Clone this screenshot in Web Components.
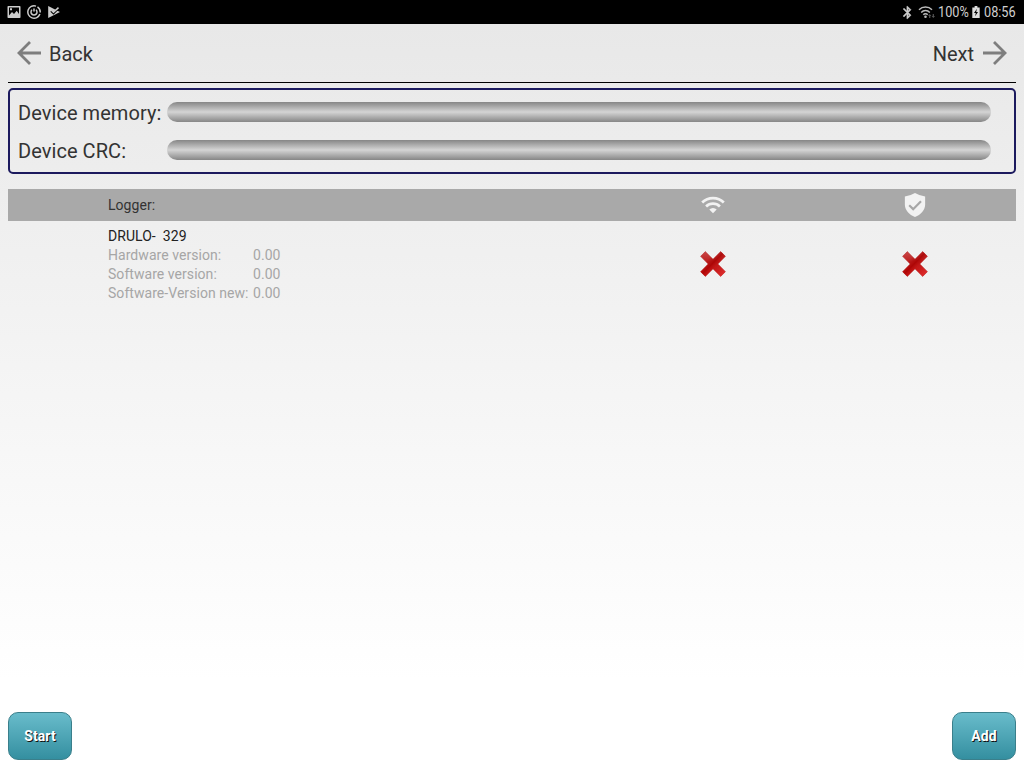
<!DOCTYPE html>
<html lang="en">
<head>
<meta charset="utf-8">
<title>Logger update</title>
<style>
    html, body {
        margin: 0;
        height: 100%;
        overflow: hidden;
    }

    body {
        font-family: Roboto, "Liberation Sans", sans-serif;
        color: #333;
    }
</style>
</head>
<body>
<logger-app></logger-app>

<script>
// Icon shapes, each with its own viewBox
const ICONS = {
    image: ['0 0 14 14', '<path fill="#ccc" fill-rule="evenodd" d="M1.3 1h11.4q.8 0 .8.8v10.4q0 .8-.8.8H1.3q-.8 0-.8-.8V1.8q0-.8.8-.8zM2 2.5v8L5 7l2 2 2.7-3.2L12 9V2.500z"/><path fill="#ccc" d="M3 3.300h2v2H3z"/>'],
    sync: ['0 0 14 14', '<g fill="none" stroke="#ccc" stroke-width="1.500"><path d="M9 1.100A6.200 6.200 0 1 0 12.900 9"/><path d="M10.500 1.900A6.200 6.200 0 0 1 13.200 7.500"/><path d="M5 4.800a3 3 0 1 0 4 0"/><path d="M7 3.600v3"/></g>'],
    play: ['0 0 14 14', '<path fill="#ccc" d="M1.200 1L13 7 1.200 13z"/><path fill="none" stroke="#000" stroke-width="1.300" d="M3.800 6.200l2.700 2.600L12.200 3"/><path fill="none" stroke="#ccc" stroke-width="1.500" d="M4.500 5.200l2 2L11.500 2.600"/>'],
    bluetooth: ['0 0 24 24', '<path fill="#ccc" stroke="#ccc" stroke-width=".8" d="M17.710 7.710L12 2h-1v7.590L6.410 5 5 6.410 10.590 12 5 17.590 6.410 19 11 14.410V22h1l5.710-5.710-4.300-4.290 4.300-4.290zM13 5.830l1.880 1.880L13 9.590V5.830zm1.880 10.460L13 18.170v-3.760l1.880 1.880z"/>'],
    signal: ['0 0 18 16', '<g fill="none" stroke="#bbb" stroke-width="1.500"><path d="M1 5.800a9.200 9.200 0 0 1 13 0"/><path d="M3.200 8.400a6 6 0 0 1 8.600 0"/><path d="M5.300 10.800a3 3 0 0 1 4.400 0"/></g><circle cx="7.500" cy="12.800" r="1.300" fill="#bbb"/><path fill="#555" d="M10 12l1.700-2 1.700 2h-1.100v2h-1.200v-2zM13.600 12h1.100v-2h1.200v2H17l-1.700 2z"/>'],
    battery: ['0 0 8 13', '<path fill="#ddd" fill-rule="evenodd" d="M2.500 0h3v1.500H8V13H0V1.500h2.500zM5 3L1.800 7.600h2L3 11l3.200-4.500h-2z"/>'],
    back: ['0 0 26 26', '<path fill="none" stroke="#7e7e7e" stroke-width="2.800" d="M25 13H3M14 2L3 13l11 11"/>'],
    next: ['0 0 26 26', '<path fill="none" stroke="#7e7e7e" stroke-width="2.800" d="M1 13h22M12 2l11 11-11 11"/>'],
    wifi: ['0 0 24 18', '<g fill="none" stroke="#f2f2f2" stroke-width="2.700"><path d="M1.200 6.500a15.300 15.300 0 0 1 21.600 0"/><path d="M5.100 10.500a9.800 9.800 0 0 1 13.800 0"/></g><path fill="#f2f2f2" d="M8.300 13.400a5.300 5.300 0 0 1 7.400 0L12 17.300z"/>'],
    shield: ['2 1 20 22', '<path fill="#f2f2f2" d="M12 1Q17 3.800 21.300 4.300v7.200c0 5-4 9.500-9.300 11.500-5.300-2-9.300-6.500-9.300-11.500V4.300Q7 3.800 12 1z"/><path fill="none" stroke="#a7a7a7" stroke-width="2" d="M6.700 12.300l3.600 3.500 7.200-7.300"/>'],
    cross: ['0 0 26 26', '<defs><linearGradient id="arm" x1="0" y1="0" x2="0" y2="1"><stop offset="0" stop-color="#c84848"/><stop offset=".4" stop-color="#be2020"/><stop offset="1" stop-color="#d01818"/></linearGradient><linearGradient id="shade" x1="0" y1="0" x2="1" y2="1"><stop offset=".3" stop-color="#a80000" stop-opacity="0"/><stop offset=".48" stop-color="#a80000" stop-opacity=".8"/><stop offset=".6" stop-color="#c01010" stop-opacity=".5"/><stop offset="1" stop-color="#f04040" stop-opacity=".7"/></linearGradient></defs><g stroke-linejoin="round"><path id="x" fill="url(#arm)" stroke="#b83030" stroke-width=".6" d="M5.300.6L13 8.200 20.700.6 25.400 5.300 17.800 13l7.600 7.700-4.700 4.700L13 17.800 5.300 25.400.6 20.700 8.200 13 .6 5.300z"/><path fill="url(#shade)" d="M5.300.6L13 8.200 20.700.6 25.400 5.300 17.800 13l7.600 7.700-4.700 4.700L13 17.800 5.300 25.400.6 20.700 8.200 13 .6 5.300z"/></g>']
};

class AppIcon extends HTMLElement {
    connectedCallback() {
        const [box, shape] = ICONS[this.getAttribute('name')];
        this.attachShadow({ mode: 'open' }).innerHTML = `
            <style>
                :host { display: block; flex: none; }
                svg { display: block; width: 100%; height: 100%; }
            </style>
            <svg viewBox="${box}">${shape}</svg>
        `;
    }
}

class StatusBar extends HTMLElement {
    constructor() {
        super();
        this.attachShadow({ mode: 'open' }).innerHTML = `
            <style>
                :host {
                    display: flex;
                    justify-content: space-between;
                    box-sizing: border-box;
                    height: 24px;
                    padding: 0 8px 0 7px;
                    background: #000;
                    color: #d0d0d0;
                    font-size: 15.5px;
                    line-height: 25px;
                }

                .group { display: flex; align-items: center; }
                .left { gap: 6px; }
                .left app-icon { width: 14px; height: 14px; }
                .bt { width: 15px; height: 15px; margin-right: 3px; }
                .signal { width: 18px; height: 16px; margin-right: 2px; }
                .battery { width: 8px; height: 12px; margin: 0 4px; }

                /* condensed digits */
                .text {
                    white-space: nowrap;
                    transform: scaleX(.82);
                    transform-origin: left;
                }
                .level { width: 30px; }
                .time { width: 32px; }
            </style>
            <div class="group left">
                <app-icon name="image"></app-icon>
                <app-icon name="sync"></app-icon>
                <app-icon name="play"></app-icon>
            </div>
            <div class="group">
                <app-icon class="bt" name="bluetooth"></app-icon>
                <app-icon class="signal" name="signal"></app-icon>
                <span class="text level">100%</span>
                <app-icon class="battery" name="battery"></app-icon>
                <span class="text time">08:56</span>
            </div>
        `;
    }
}

class NavBar extends HTMLElement {
    constructor() {
        super();
        this.attachShadow({ mode: 'open' }).innerHTML = `
            <style>
                :host {
                    display: flex;
                    justify-content: space-between;
                    box-sizing: border-box;
                    height: 59px;
                    margin: 0 8px;
                    padding: 0 8px;
                    border-bottom: 1px solid #000;
                    font-size: 20px;
                }

                div { display: flex; align-items: center; gap: 7px; height: 60px; }
                div + div { gap: 8px; }
                app-icon { width: 26px; height: 26px; margin-top: -2px; }
            </style>
            <div><app-icon name="back"></app-icon><slot name="back"></slot></div>
            <div><slot name="next"></slot><app-icon name="next"></app-icon></div>
        `;
    }
}

class ProgressRow extends HTMLElement {
    constructor() {
        super();
        this.attachShadow({ mode: 'open' }).innerHTML = `
            <style>
                :host {
                    display: grid;
                    grid-template-columns: 149px 1fr;
                    align-items: center;
                    height: 38px;
                    font-size: 20px;
                    letter-spacing: .06px;
                    white-space: nowrap;
                }

                .bar {
                    height: 20px;
                    margin-top: -2px;
                    border-radius: 10px;
                    background: linear-gradient(#868686, #d4d4d4 50%, #868686);
                }
            </style>
            <slot></slot>
            <div class="bar"></div>
        `;
    }
}

class ProgressPanel extends HTMLElement {
    constructor() {
        super();
        this.attachShadow({ mode: 'open' }).innerHTML = `
            <style>
                :host {
                    display: block;
                    box-sizing: border-box;
                    height: 86px;
                    margin: 5px 8px 15px;
                    padding: 4px 23px 0 8px;
                    border: 2px solid #1c1a5e;
                    border-radius: 5px;
                }
            </style>
            <slot></slot>
        `;
    }
}

class LoggerTable extends HTMLElement {
    constructor() {
        super();
        this.attachShadow({ mode: 'open' }).innerHTML = `
            <style>
                :host {
                    display: block;
                    margin: 0 8px;
                    font-size: 14px;
                    letter-spacing: .05px;
                }

                .head {
                    display: grid;
                    grid-template-columns: 1fr 202px 202px;
                    align-items: center;
                    justify-items: center;
                    height: 32px;
                    background: #a9a9a9;
                }

                .title { justify-self: start; padding-left: 100px; }
                .wifi { width: 24px; height: 18px; }
                .shield { width: 22px; height: 24px; }
            </style>
            <div class="head">
                <span class="title">Logger:</span>
                <app-icon class="wifi" name="wifi"></app-icon>
                <app-icon class="shield" name="shield"></app-icon>
            </div>
            <slot></slot>
        `;
    }
}

class LoggerRow extends HTMLElement {
    connectedCallback() {
        this.attachShadow({ mode: 'open' }).innerHTML = `
            <style>
                :host {
                    display: grid;
                    grid-template-columns: 1fr 202px 202px;
                    align-items: center;
                    justify-items: center;
                    padding-top: 6px;
                    line-height: 19px;
                }

                .info { justify-self: start; padding-left: 100px; }
                .name { color: #222; white-space: pre; }

                .versions {
                    display: grid;
                    grid-template-columns: 145px auto;
                    color: #a6a6a6;
                    white-space: nowrap;
                }

                app-icon { width: 26px; height: 26px; margin-top: -3px; }
            </style>
            <div class="info">
                <div class="name"><slot></slot></div>
                <div class="versions">
                    <span>Hardware version:</span><span>${this.getAttribute('hardware')}</span>
                    <span>Software version:</span><span>${this.getAttribute('software')}</span>
                    <span>Software-Version new:</span><span>${this.getAttribute('latest')}</span>
                </div>
            </div>
            <app-icon name="cross"></app-icon>
            <app-icon name="cross"></app-icon>
        `;
    }
}

class ActionButton extends HTMLElement {
    constructor() {
        super();
        this.attachShadow({ mode: 'open' }).innerHTML = `
            <style>
                :host { display: block; }

                button {
                    display: block;
                    width: 64px;
                    height: 48px;
                    padding: 0;
                    border: 1px solid #3a7f8b;
                    border-radius: 10px;
                    background: linear-gradient(#69bccb, #348fa0);
                    color: #fff;
                    font: bold 14px Roboto, "Liberation Sans", sans-serif;
                    letter-spacing: .1px;
                    text-shadow: 1px 1px 0 #111;
                }
            </style>
            <button><slot></slot></button>
        `;
    }
}

class LoggerApp extends HTMLElement {
    constructor() {
        super();
        this.attachShadow({ mode: 'open' }).innerHTML = `
            <style>
                :host {
                    display: flex;
                    flex-direction: column;
                    height: 100vh;
                    background: linear-gradient(#e8e8e8 24px, #fff 680px);
                }

                .actions {
                    display: flex;
                    justify-content: space-between;
                    margin-top: auto;
                    padding: 8px;
                }
            </style>
            <status-bar></status-bar>
            <nav-bar>
                <span slot="back">Back</span>
                <span slot="next">Next</span>
            </nav-bar>
            <progress-panel>
                <progress-row>Device memory:</progress-row>
                <progress-row>Device CRC:</progress-row>
            </progress-panel>
            <logger-table>
                <logger-row hardware="0.00" software="0.00" latest="0.00">DRULO-  329</logger-row>
            </logger-table>
            <div class="actions">
                <action-button>Start</action-button>
                <action-button>Add</action-button>
            </div>
        `;
    }
}

// Register the custom elements
customElements.define('app-icon', AppIcon);
customElements.define('status-bar', StatusBar);
customElements.define('nav-bar', NavBar);
customElements.define('progress-row', ProgressRow);
customElements.define('progress-panel', ProgressPanel);
customElements.define('logger-table', LoggerTable);
customElements.define('logger-row', LoggerRow);
customElements.define('action-button', ActionButton);
customElements.define('logger-app', LoggerApp);
</script>
</body>
</html>
